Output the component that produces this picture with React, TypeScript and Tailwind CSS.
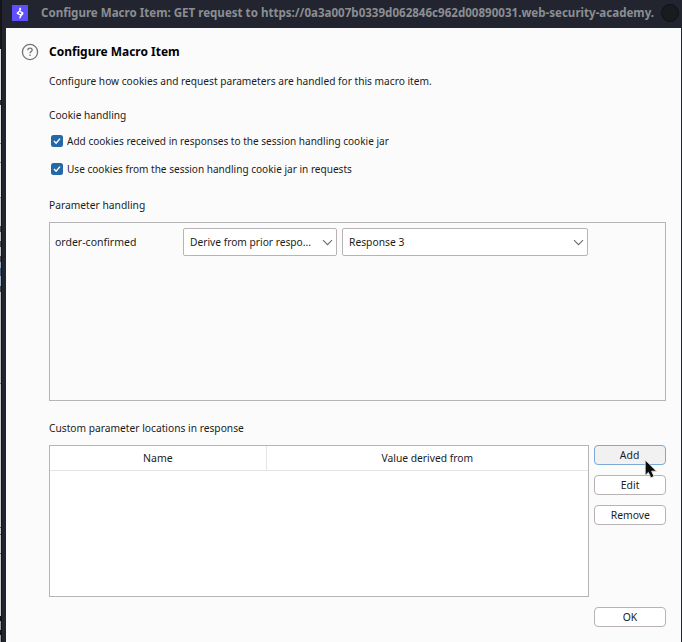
import type { ReactNode } from "react";

function Label({ children, className = "scale-x-[0.8995] origin-left" }: { children: ReactNode; className?: string }) {
  return <span className={`inline-block whitespace-nowrap ${className}`}>{children}</span>;
}

function Check({ label, className }: { label: string; className: string }) {
  return (
    <div className="flex h-7 items-center gap-1 pl-0.5">
      <svg width="12" height="12" viewBox="0 0 12 12" className="shrink-0">
        <rect width="12" height="12" rx="2.5" fill="#2468a6" />
        <path d="M3 6.1 5.1 8.2 9 3.6" fill="none" stroke="#fff" strokeWidth="1.4" />
      </svg>
      <Label className={className}>{label}</Label>
    </div>
  );
}

function Select({ label, className, textClass }: { label: string; className: string; textClass: string }) {
  return (
    <div className={`flex h-7 shrink-0 items-center justify-between rounded-[2px] border border-[#b8b4b6] bg-white pl-1.5 pr-[3px] ${className}`}>
      <div className="w-0"><Label className={textClass}>{label}</Label></div>
      <svg width="11" height="7" viewBox="0 0 11 7" className="shrink-0">
        <path d="M1 1.2 5.5 5.7 10 1.2" fill="none" stroke="#6c6c6c" strokeWidth="1.1" />
      </svg>
    </div>
  );
}

function Button({ label, className = "border-[#b8b2b6] bg-white" }: { label: string; className?: string }) {
  return (
    <button className={`flex h-5 w-[72px] shrink-0 items-center justify-center rounded-[4px] border ${className}`}>
      <Label className="origin-center scale-x-[0.92]">{label}</Label>
    </button>
  );
}

const slivers = [
  { h: 49, c: "bg-[#15171c]" }, { h: 51, c: "bg-[#d8d9da]" }, { h: 5, c: "bg-[#303235]" },
  { h: 38, c: "bg-[#dedede]" }, { h: 1, c: "bg-[#888888]" }, { h: 18, c: "bg-[#dedede]" },
  { h: 1, c: "bg-[#888888]" }, { h: 34, c: "bg-[#dedede]" }, { h: 1, c: "bg-[#888888]" },
  { h: 28, c: "bg-[#c6c7c8]" }, { h: 6, c: "bg-[#4a4d50]" }, { h: 9, c: "bg-[#bcbcbc]" },
  { h: 6, c: "bg-[#4a4d50]" }, { h: 9, c: "bg-[#c2c2c2]" }, { h: 6, c: "bg-[#4a4d50]" },
  { h: 6, c: "bg-[#95a9c4]" }, { h: 8, c: "bg-[#4b5f7b]" }, { h: 10, c: "bg-[#9fb1c8]" },
  { h: 6, c: "bg-[#4a4d50]" }, { h: 91, c: "bg-[#bcbebe]" }, { h: 1, c: "bg-[#777777]" },
  { h: 143, c: "bg-[#c9cac9]" }, { h: 1, c: "bg-[#666666]" }, { h: 6, c: "bg-[#c9cac9]" },
  { h: 1, c: "bg-[#666666]" }, { h: 18, c: "bg-[#c9cac9]" }, { h: 1, c: "bg-[#666666]" },
  { h: 62, c: "bg-[#c9cac9]" }, { h: 5, c: "bg-[#15171c]" }, { h: 9, c: "bg-[#999b9c]" },
  { h: 5, c: "bg-[#15171c]" }, { h: 8, c: "bg-[#999b9c]" },
];

export default function App() {
  return (
    <div className="flex h-[642px] w-[682px] overflow-hidden bg-[#22252f] font-['Noto_Sans',sans-serif] text-[12px] leading-4 text-[#1c1c1c]">
      <div className="flex w-px shrink-0 flex-col overflow-hidden">
        {slivers.map((s, i) => <div key={i} className={`shrink-0 ${s.c}`} style={{ height: s.h }} />)}
      </div>
      <div className="w-px shrink-0 bg-[#111318]" />
      <div className="flex w-[680px] shrink-0 flex-col">
        <header className="flex h-7 shrink-0 items-center pb-0.5 pl-2.5">
          <svg width="16" height="16" viewBox="0 0 16 16" className="shrink-0">
            <rect width="16" height="16" fill="#5f4fff" />
            <path d="M8.7 2.6 7.3 3 7.2 5.4 4.6 7.7v1l3.6 1.9-.9 1.3v1.6l1.2-.2 1.1-2.3L11.4 9V7.4L8.3 5.8l.9-1.4z M7.4 6.8l2.1 1.2-.8 1.2-2-1z" fill="#fff" fillRule="evenodd" />
          </svg>
          <div className="ml-[13px] w-[614px] shrink-0 overflow-hidden font-bold text-[#8b8e93]">
            <Label className="origin-left scale-x-[0.9637]">Configure Macro Item: GET request to https://0a3a007b0339d062846c962d00890031.web-security-academy.</Label>
          </div>
          <div className="ml-[6px] size-[18px] shrink-0 rounded-full border border-[#111217] bg-[#1a1b1f]" />
        </header>
        <main className="ml-1 mr-px flex flex-1 flex-col bg-[#fbfbfb] pl-[15px] pr-[15px]">
          <div className="flex h-[38px] items-center pt-2.5">
            <svg width="18" height="18" viewBox="0 0 18 18" className="mr-2.5 shrink-0" fill="none" stroke="#747474" strokeWidth="1.3">
              <circle cx="9" cy="9" r="7.6" />
              <path d="M6.8 7.3c0-1.3.9-2.1 2.2-2.1s2.2.7 2.2 1.9c0 1.6-2.2 1.5-2.2 3.1" />
              <path d="M9 11.5v1.5" />
            </svg>
            <h1 className="font-bold text-black"><Label className="origin-left scale-x-[0.996]">Configure Macro Item</Label></h1>
          </div>
          <div className="ml-7 flex flex-1 flex-col text-[11.3px]">
            <p className="mt-[7px] h-4"><Label>Configure how cookies and request parameters are handled for this macro item.</Label></p>
            <p className="mt-[18px] h-4"><Label className="origin-left scale-x-[0.898]">Cookie handling</Label></p>
            <div className="mt-1">
              <Check label="Add cookies received in responses to the session handling cookie jar" className="origin-left scale-x-[0.889]" />
              <Check label="Use cookies from the session handling cookie jar in requests" className="origin-left scale-x-[0.89]" />
            </div>
            <p className="mt-[14px] h-4"><Label className="origin-left scale-x-[0.908]">Parameter handling</Label></p>
            <section className="mt-[9px] flex h-[179px] w-[617px] shrink-0 items-start border border-[#b5b5b5] pl-[5px] pt-[5px]">
              <div className="flex h-7 w-32 items-center"><Label className="origin-left scale-x-[0.93]">order-confirmed</Label></div>
              <Select label="Derive from prior respo..." className="w-[154px]" textClass="origin-left scale-x-[0.903]" />
              <Select label="Response 3" className="ml-[5px] w-[246px]" textClass="origin-left scale-x-[0.91]" />
            </section>
            <p className="mt-[19px] h-4"><Label className="origin-left scale-x-[0.905]">Custom parameter locations in response</Label></p>
            <div className="mt-[9px] flex gap-[5px]">
              <div className="h-[152px] w-[540px] shrink-0 border border-[#b5b5b5] bg-white">
                <div className="flex h-[25px] border-b border-[#e4e4e4] text-center">
                  <div className="w-[217px] border-r border-[#e4e4e4] pt-1"><Label className="origin-center scale-x-[0.93]">Name</Label></div>
                  <div className="flex-1 pt-1"><Label className="origin-center scale-x-[0.91]">Value derived from</Label></div>
                </div>
              </div>
              <div className="flex flex-col gap-2.5">
                <div className="relative">
                  <Button label="Add" className="border-[#7ca9d8] bg-[#f1f1f1]" />
                  <svg width="14" height="20" viewBox="0 0 14 20" className="absolute left-[50px] top-[14px]">
                    <path d="M1.2 1v15.4l3.2-3 2.4 5.4 3.2-1.4-2.4-5.2h4.9z" fill="#0c0c0c" stroke="#dedede" strokeWidth=".9" />
                  </svg>
                </div>
                <Button label="Edit" />
                <Button label="Remove" />
              </div>
            </div>
            <footer className="mt-2.5 flex w-[617px] justify-end"><Button label="OK" /></footer>
          </div>
        </main>
      </div>
    </div>
  );
}
